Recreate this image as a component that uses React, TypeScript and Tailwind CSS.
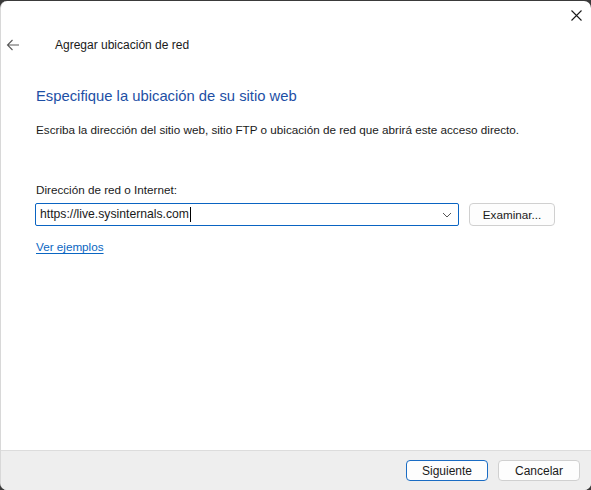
import React from "react";

const font = { fontFamily: '"Liberation Sans", Arial, sans-serif' };

const App = () => {
  return (
    <div
      className="w-[591px] h-[490px] bg-[#3a3a3a] pt-px text-[#1a1a1a]"
      style={font}
    >
      <div className="h-full bg-white rounded-[7px] overflow-hidden flex flex-col border-l border-[#d8d8d8]">
        {/* title bar */}
        <div className="h-[29px] flex justify-end items-start pt-[9px] pr-[9px]">
          <svg width="11" height="11" viewBox="0 0 11 11" className="text-[#1a1a1a]">
            <path d="M0.5 0.5 L10.5 10.5 M10.5 0.5 L0.5 10.5" stroke="currentColor" strokeWidth="1.1" />
          </svg>
        </div>

        {/* header */}
        <div className="h-[30px] flex items-center">
          <div className="w-[48px] pl-[5px] flex items-center">
            <svg width="14" height="12" viewBox="0 0 14 12" className="text-[#5a5a5a]">
              <path d="M13 6 H1.5 M6.5 1 L1.5 6 L6.5 11" stroke="currentColor" strokeWidth="1.1" fill="none" />
            </svg>
          </div>
          <span className="text-[12px] ml-[6px]">Agregar ubicación de red</span>
        </div>

        {/* content */}
        <div className="px-[35px] flex-1">
          <h1 className="text-[14.8px] text-[#1d4fa5] mt-[26px] leading-[20px]">
            Especifique la ubicación de su sitio web
          </h1>
          <p className="text-[11.7px] mt-[16px] leading-[16px]">
            Escriba la dirección del sitio web, sitio FTP o ubicación de red que abrirá este acceso directo.
          </p>

          <p className="text-[11.7px] mt-[44px] leading-[16px]">Dirección de red o Internet:</p>
          <div className="flex mt-[5px] gap-[10px]">
            <div className="w-[424px] h-[23px] border border-[#0a64c2] rounded-[2px] flex items-center pl-[4px] pr-[6px] -ml-px">
              <span className="text-[12.2px] flex-1 flex items-center">
                https://live.sysinternals.com
                <span className="inline-block w-px h-[15px] bg-black ml-px" />
              </span>
              <svg width="10" height="6" viewBox="0 0 10 6" className="text-[#555]">
                <path d="M1 1 L5 5 L9 1" stroke="currentColor" strokeWidth="1" fill="none" />
              </svg>
            </div>
            <button className="w-[86px] h-[23px] border border-[#d0d0d0] rounded-[4px] bg-[#fdfdfd] text-[11.7px]">
              Examinar...
            </button>
          </div>

          <a className="inline-block mt-[12px] text-[11.7px] text-[#0a66c2] underline underline-offset-2">
            Ver ejemplos
          </a>
        </div>

        {/* footer */}
        <div className="h-[40px] border-t border-[#dcdcdc] bg-[#eeeeee] flex justify-end items-center gap-[10px] pr-[11px]">
          <button className="w-[82px] h-[21px] rounded-[4px] border border-[#1a6cc4] bg-[#fdfdfd] text-[12px]">
            Siguiente
          </button>
          <button className="w-[82px] h-[21px] rounded-[4px] border border-[#d0d0d0] bg-[#fdfdfd] text-[12px]">
            Cancelar
          </button>
        </div>
      </div>
    </div>
  );
};

export default App;
